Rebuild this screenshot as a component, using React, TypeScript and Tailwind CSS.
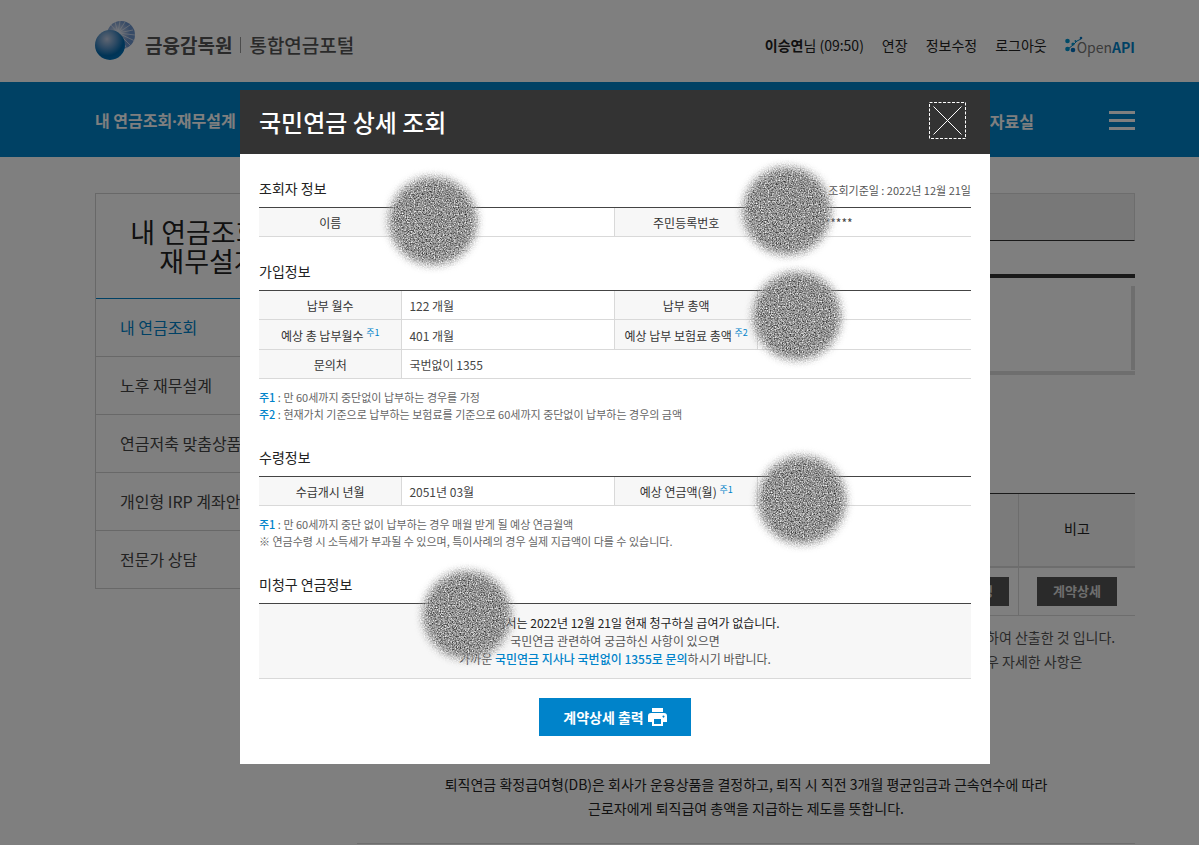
import type { ReactNode } from 'react';

const MENU = [
  '내 연금조회',
  '노후 재무설계',
  '연금저축 맞춤상품',
  '개인형 IRP 계좌안내',
  '전문가 상담',
];

function Emblem() {
  return (
    <svg className="w-10 h-10" viewBox="0 0 40 40" aria-hidden="true">
      <defs>
        <radialGradient id="globe" cx="0.4" cy="0.3" r="0.7">
          <stop offset="0" stopColor="#c0cce4" />
          <stop offset="0.45" stopColor="#5a94c8" />
          <stop offset="0.8" stopColor="#0068ac" />
          <stop offset="1" stopColor="#0070b8" />
        </radialGradient>
        <radialGradient id="halo" cx="0.38" cy="0.42" r="0.65">
          <stop offset="0" stopColor="#f4f6fa" />
          <stop offset="0.35" stopColor="#a8bcdc" />
          <stop offset="0.7" stopColor="#6c94cc" />
        </radialGradient>
      </defs>
      <circle cx="26" cy="14" r="14" fill="url(#halo)" />
      <g stroke="#e4eaf4" strokeWidth="0.700">
        <path d="M23 12 16 4M23 12 20 1M23 12 25 0M23 12 30 1M23 12 35 4M23 12 38 9M23 12 40 14M23 12 40 20M23 12 36 25M23 12 32 28" />
      </g>
      <circle cx="15" cy="24" r="15" fill="url(#globe)" />
    </svg>
  );
}

function OpenApiLogo() {
  return (
    <a className="flex items-center text-sm text-[#777]" href="#openapi">
      <svg className="w-5 h-5 -mr-2" viewBox="0 0 20 20" aria-hidden="true">
        <path d="M8 10 12 6 16 4M3 14 8 10" fill="none" stroke="#0083ca" strokeWidth="1" />
        <g fill="#0096d0">
          <circle cx="2.500" cy="6" r="2.300" />
          <circle cx="8" cy="9" r="1.600" />
          <circle cx="2.500" cy="14" r="2.300" />
          <circle cx="8" cy="15" r="2.300" fill="#0070c0" />
          <circle cx="10.500" cy="6" r="1" />
          <circle cx="16" cy="3" r="1.300" fill="#0070c0" />
        </g>
      </svg>
      <span className="pt-1">
        Open<b className="text-[#0083ca]">API</b>
      </span>
    </a>
  );
}

function PrintIcon() {
  return (
    <svg className="w-[19px] h-[18px]" viewBox="0 0 19 18" fill="#fff" aria-hidden="true">
      <path d="M4 0h11v4H4z" />
      <path
        fillRule="evenodd"
        d="M3 5h13a3 3 0 0 1 3 3v6h-4v4H4v-4H0V8a3 3 0 0 1 3-3Zm3 6v5h7v-5H6Zm9.500-3.500a1 1 0 1 0 .01 0Z"
      />
    </svg>
  );
}

// Grainy dot covering personal data
function Smudge({ className }: { className: string }) {
  return (
    <svg
      className={`absolute w-[120px] h-[120px] pointer-events-none ${className}`}
      viewBox="0 0 120 120"
      aria-hidden="true"
    >
      <filter id="grain" x="0" y="0" width="120" height="120" filterUnits="userSpaceOnUse" colorInterpolationFilters="sRGB">
        <feTurbulence type="fractalNoise" baseFrequency="0.75" numOctaves="3" seed="7" result="noise" />
        <feColorMatrix
          in="noise"
          type="matrix"
          values="1.100 0.500 0 0 -0.230  1.100 0.500 0 0 -0.230  1.100 0.500 0 0 -0.230  0 0 0 0 1"
          result="gray"
        />
        <feGaussianBlur in="SourceAlpha" stdDeviation="4" result="soft" />
        <feComposite in="gray" in2="soft" operator="in" />
      </filter>
      <circle cx="60" cy="60" r="44" filter="url(#grain)" />
    </svg>
  );
}

function Section({ title, side, children }: { title: string; side?: string; children: ReactNode }) {
  return (
    <section className="mt-6">
      <div className="flex items-end justify-between mb-[9px]">
        <h3 className="text-sm leading-5 text-[#222]">{title}</h3>
        {side && <span className="text-[11px] leading-4 text-[#555]">{side}</span>}
      </div>
      {children}
    </section>
  );
}

function InfoTable({ children }: { children: ReactNode }) {
  return (
    <table className="w-full text-xs leading-4 border-separate table-fixed border-spacing-0 border-t border-[#444]">
      <colgroup>
        <col className="w-1/5" />
        <col className="w-[30%]" />
        <col className="w-1/5" />
        <col className="w-[30%]" />
      </colgroup>
      <tbody>{children}</tbody>
    </table>
  );
}

function Th({ children }: { children: ReactNode }) {
  return (
    <th
      className="h-[29px] pt-[2px] font-normal text-center text-[#333] bg-[#f7f7f7] border-b border-[#d9d9d9] whitespace-nowrap"
      scope="row"
    >
      {children}
    </th>
  );
}

function Td({ children, span }: { children?: ReactNode; span?: number }) {
  return (
    <td
      className="h-[29px] pt-[2px] pl-[7px] text-[#444] border-b border-l not-last:border-r border-[#d9d9d9]"
      colSpan={span}
    >
      {children}
    </td>
  );
}

function Sup({ children }: { children: ReactNode }) {
  return <sup className="text-[9px] leading-none text-[#0083ca]">{children}</sup>;
}

function Note({ children }: { children: ReactNode }) {
  return <p className="mt-[10px] text-[11px] leading-[17px] text-[#666]">{children}</p>;
}

function Mark({ children }: { children: ReactNode }) {
  return <span className="font-medium text-[#0083ca]">{children}</span>;
}

function DetailDialog() {
  return (
    <div className="fixed inset-0 pt-[90px] pl-[31px] bg-black/50">
      <div
        className="relative w-full max-w-[750px] mx-auto bg-white"
        role="dialog"
        aria-labelledby="dialog-title"
      >
        <div className="flex items-center justify-between h-16 pl-[19px] pr-6 bg-[#333]">
          <h2 className="text-2xl font-medium text-white" id="dialog-title">
            국민연금 상세 조회
          </h2>
          <button className="mb-1" type="button" aria-label="닫기">
            <svg className="w-[37px] h-[37px]" viewBox="0 0 37 37" fill="none" stroke="#fff">
              <rect x="0.500" y="0.500" width="36" height="36" strokeDasharray="3 1.500" />
              <path d="m4.500 4.500 28 28M32.500 4.500l-28 28" />
            </svg>
          </button>
        </div>

        <div className="px-[19px] pb-7 flow-root">
          <Section title="조회자 정보" side="조회기준일 : 2022년 12월 21일">
            <InfoTable>
              <tr>
                <Th>이름</Th>
                <Td />
                <Th>주민등록번호</Th>
                <Td>
                  <span className="pl-12">*******</span>
                </Td>
              </tr>
            </InfoTable>
          </Section>

          <Section title="가입정보">
            <InfoTable>
              <tr>
                <Th>납부 월수</Th>
                <Td>122 개월</Td>
                <Th>납부 총액</Th>
                <Td />
              </tr>
              <tr className="h-[30px]">
                <Th>
                  예상 총 납부월수 <Sup>주1</Sup>
                </Th>
                <Td>401 개월</Td>
                <Th>
                  예상 납부 보험료 총액 <Sup>주2</Sup>
                </Th>
                <Td />
              </tr>
              <tr>
                <Th>문의처</Th>
                <Td span={3}>국번없이 1355</Td>
              </tr>
            </InfoTable>
            <Note>
              <Mark>주1</Mark> : 만 60세까지 중단없이 납부하는 경우를 가정
              <br />
              <Mark>주2</Mark> : 현재가치 기준으로 납부하는 보험료를 기준으로 60세까지 중단없이
              납부하는 경우의 금액
            </Note>
          </Section>

          <Section title="수령정보">
            <InfoTable>
              <tr>
                <Th>수급개시 년월</Th>
                <Td>2051년 03월</Td>
                <Th>
                  예상 연금액(월) <Sup>주1</Sup>
                </Th>
                <Td />
              </tr>
            </InfoTable>
            <Note>
              <Mark>주1</Mark> : 만 60세까지 중단 없이 납부하는 경우 매월 받게 될 예상 연금월액
              <br />※ 연금수령 시 소득세가 부과될 수 있으며, 특이사례의 경우 실제 지급액이 다를 수
              있습니다.
            </Note>
          </Section>

          <Section title="미청구 연금정보">
            <p className="py-[10px] text-xs leading-[18px] text-center text-[#555] bg-[#f7f7f7] border-t border-b border-t-[#444] border-b-[#d9d9d9]">
              <span className="text-[#222]">
                이승연님께서는 2022년 12월 21일 현재 청구하실 급여가 없습니다.
              </span>
              <br />
              국민연금 관련하여 궁금하신 사항이 있으면
              <br />
              가까운 <Mark>국민연금 지사나 국번없이 1355로 문의</Mark>하시기 바랍니다.
            </p>
          </Section>

          <button
            className="flex items-center gap-1 h-[38px] px-6 mx-auto mt-[19px] text-sm font-bold text-white bg-[#0083ca]"
            type="button"
          >
            계약상세 출력
            <PrintIcon />
          </button>
        </div>

        <Smudge className="left-[133px] top-[71px]" />
        <Smudge className="left-[487px] top-[61px]" />
        <Smudge className="left-[497px] top-[166px]" />
        <Smudge className="left-[502px] top-[350px]" />
        <Smudge className="left-[167px] top-[465px]" />
      </div>
    </div>
  );
}

export default function App() {
  return (
    <div className="h-screen overflow-hidden bg-white font-['Noto_Sans_CJK_KR',sans-serif] text-[#222]">
      <header className="pl-[31px]">
        <div className="flex items-center justify-between max-w-[1040px] h-[82px] mx-auto">
          <a className="flex items-center text-[19px] font-medium text-[#555]" href="#home">
            <Emblem />
            <span className="ml-[10px] pt-2 font-bold leading-6">금융감독원</span>
            <span className="w-px h-4 mx-2 mt-2 bg-[#999]" />
            <span className="pt-2 leading-6">통합연금포털</span>
          </a>
          <nav className="flex items-center gap-[18px] pt-2 text-sm">
            <span>
              <b>이승연</b>님 (09:50)
            </span>
            <a href="#extend">연장</a>
            <a href="#profile">정보수정</a>
            <a href="#logout">로그아웃</a>
            <OpenApiLogo />
          </nav>
        </div>
      </header>

      <div className="pl-[31px] bg-[#0082c8]">
        <nav className="flex items-center justify-between max-w-[1040px] h-[75px] pt-[2px] mx-auto font-bold text-white">
          <a href="#plan">
            내 연금조회<span className="font-['Noto_Sans',sans-serif]">·</span>재무설계
          </a>
          <a className="ml-auto mr-[75px]" href="#library">
            자료실
          </a>
          <button className="flex flex-col gap-[5px]" type="button" aria-label="전체메뉴">
            <span className="w-[26px] h-[3px] bg-white" />
            <span className="w-[26px] h-[3px] bg-white" />
            <span className="w-[26px] h-[3px] bg-white" />
          </button>
        </nav>
      </div>

      <div className="pl-[31px]">
        <div className="flex items-start max-w-[1040px] mx-auto pt-9">
          <aside className="w-[232px] shrink-0 border border-b-0 border-[#d0d0d0]">
            <h2 className="flex flex-col items-center justify-center h-[105px] text-[27px] leading-[29px] border-b border-b-[#0083ca]">
              <span className="pr-4">내 연금조회·</span>
              <span className="pr-1">재무설계</span>
            </h2>
            <ul>
              {MENU.map((item, i) => (
                <li key={item} className="border-b border-[#d0d0d0]">
                  <a
                    className={`block pl-6 leading-[57px] ${i === 0 ? 'text-[#0083ca]' : 'text-[#444]'}`}
                    href="#menu"
                  >
                    {item}
                  </a>
                </li>
              ))}
            </ul>
          </aside>

          <main className="ml-[30px] grow">
            <div className="h-12 bg-[#f0f0f0] border border-[#dadada] border-b-[#333]" />
            <div className="h-1 mt-[33px] bg-[#333]" />
            <div className="mt-2 border-b-4 border-[#dcdcdc] pb-px">
              <div className="h-[84px] border-r-4 border-[#dcdcdc]" />
            </div>

            <table className="w-full mt-[118px] text-sm border-separate border-spacing-0 border-t border-[#333]">
              <thead>
                <tr className="bg-[#f6f6f6]">
                  <th className="h-[74px] border-b-2 border-r border-[#dadada]" />
                  <th className="w-[116px] pb-1 font-normal border-b-2 border-[#dadada]">비고</th>
                </tr>
              </thead>
              <tbody className="text-[13px] font-bold text-[#ddd]">
                <tr>
                  <td className="h-12 pr-[9px] text-right border-b border-r border-[#dadada]">
                    <button className="h-[29px] px-4 bg-[#555]" type="button">
                      신청
                    </button>
                  </td>
                  <td className="text-center border-b border-[#dadada]">
                    <button className="h-[29px] px-4 bg-[#555]" type="button">
                      계약상세
                    </button>
                  </td>
                </tr>
              </tbody>
            </table>
            <p className="w-[149px] mt-[9px] ml-auto text-sm leading-6 text-[#555]">
              하여 산출한 것 입니다.
              <br />우 자세한 사항은
            </p>

            <p className="pb-[23px] mt-[99px] text-sm leading-6 text-center border-b border-[#ddd]">
              퇴직연금 확정급여형(DB)은 회사가 운용상품을 결정하고, 퇴직 시 직전 3개월 평균임금과
              근속연수에 따라
              <br />
              근로자에게 퇴직급여 총액을 지급하는 제도를 뜻합니다.
            </p>
          </main>
        </div>
      </div>

      <DetailDialog />
    </div>
  );
}
